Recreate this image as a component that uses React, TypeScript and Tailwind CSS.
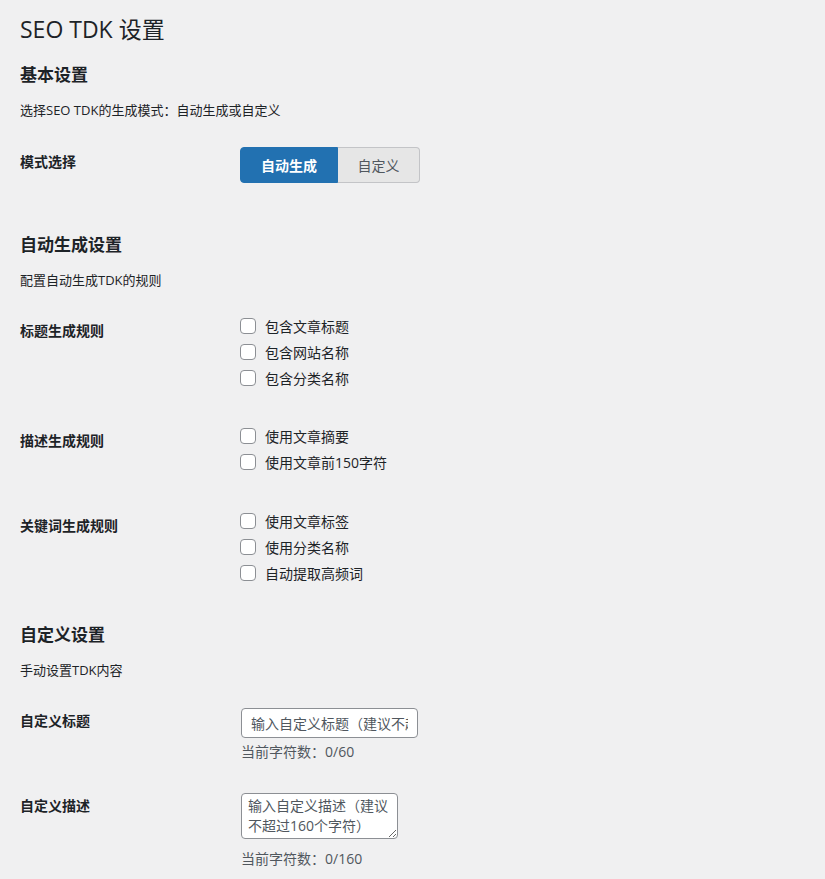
import { useState } from 'react';

const font = { fontFamily: '"Open Sans", "Noto Sans CJK SC", sans-serif' };

function Check({ label }: { label: string }) {
  return (
    <label className="flex h-[26px] items-center gap-[9px] text-[14px] text-[#1d2327]">
      <input
        type="checkbox"
        className="h-4 w-4 appearance-none rounded-[4px] border border-[#8c8f94] bg-white"
      />
      <span>{label}</span>
    </label>
  );
}

export default function App() {
  const [mode, setMode] = useState<'auto' | 'custom'>('auto');

  return (
    <div style={font} className="min-h-[879px] w-full bg-[#f0f0f1] px-5 text-[#1d2327]">
      <h1 className="pt-[15px] text-[23px] leading-[29px] font-normal">SEO TDK 设置</h1>

      {/* 基本设置 */}
      <h2 className="mt-5 text-[17px] leading-[22px] font-semibold">基本设置</h2>
      <p className="mt-[14px] text-[13px] leading-5">选择SEO TDK的生成模式：自动生成或自定义</p>
      <div className="mt-[27px] flex items-start">
        <div className="w-[220px] pt-[5px] text-[14px] leading-5 font-semibold">模式选择</div>
        <div className="flex h-9 text-[14px]">
          <button
            onClick={() => setMode('auto')}
            className={
              mode === 'auto'
                ? 'w-[98px] rounded-l-[4px] border border-[#2271b1] bg-[#2271b1] font-semibold text-white'
                : 'w-[98px] rounded-l-[4px] border border-[#c3c4c7] bg-[#e6e6e6] text-[#50575e]'
            }
          >
            自动生成
          </button>
          <button
            onClick={() => setMode('custom')}
            className={
              mode === 'custom'
                ? 'w-[82px] rounded-r-[4px] border border-[#2271b1] bg-[#2271b1] font-semibold text-white'
                : 'w-[82px] rounded-r-[4px] border border-l-0 border-[#c3c4c7] bg-[#e6e6e6] text-[#50575e]'
            }
          >
            自定义
          </button>
        </div>
      </div>

      {/* 自动生成设置 */}
      <h2 className="mt-[51px] text-[17px] leading-[22px] font-semibold">自动生成设置</h2>
      <p className="mt-[14px] text-[13px] leading-5">配置自动生成TDK的规则</p>

      <div className="mt-[23px] flex items-start">
        <div className="w-[220px] pt-[8px] text-[14px] leading-5 font-semibold">标题生成规则</div>
        <div className="flex flex-col">
          <Check label="包含文章标题" />
          <Check label="包含网站名称" />
          <Check label="包含分类名称" />
        </div>
      </div>

      <div className="mt-8 flex items-start">
        <div className="w-[220px] pt-[8px] text-[14px] leading-5 font-semibold">描述生成规则</div>
        <div className="flex flex-col">
          <Check label="使用文章摘要" />
          <Check label="使用文章前150字符" />
        </div>
      </div>

      <div className="mt-[33px] flex items-start">
        <div className="w-[220px] pt-[8px] text-[14px] leading-5 font-semibold">关键词生成规则</div>
        <div className="flex flex-col">
          <Check label="使用文章标签" />
          <Check label="使用分类名称" />
          <Check label="自动提取高频词" />
        </div>
      </div>

      {/* 自定义设置 */}
      <h2 className="mt-[38px] text-[17px] leading-[22px] font-semibold">自定义设置</h2>
      <p className="mt-[14px] text-[13px] leading-5">手动设置TDK内容</p>

      <div className="mt-7 flex items-start">
        <div className="w-[221px] pt-[3px] text-[14px] leading-5 font-semibold">自定义标题</div>
        <div className="flex flex-col">
          <input
            type="text"
            placeholder="输入自定义标题（建议不超过60个字符）"
            className="h-[30px] w-[177px] rounded-[4px] border border-[#8c8f94] bg-white px-[9px] text-[14px] placeholder:text-[#50575e]"
          />
          <p className="mt-1 text-[14px] leading-5 text-[#50575e]">当前字符数：0/60</p>
        </div>
      </div>

      <div className="mt-[31px] flex items-start">
        <div className="w-[221px] pt-[3px] text-[14px] leading-5 font-semibold">自定义描述</div>
        <div className="flex flex-col">
          <textarea
            rows={2}
            placeholder="输入自定义描述（建议不超过160个字符）"
            className="w-[157px] rounded-[4px] border border-[#8c8f94] bg-white px-[6px] py-[2px] text-[14px] leading-5 placeholder:text-[#50575e]"
          />
          <p className="mt-[10px] text-[14px] leading-5 text-[#50575e]">当前字符数：0/160</p>
        </div>
      </div>
    </div>
  );
}
